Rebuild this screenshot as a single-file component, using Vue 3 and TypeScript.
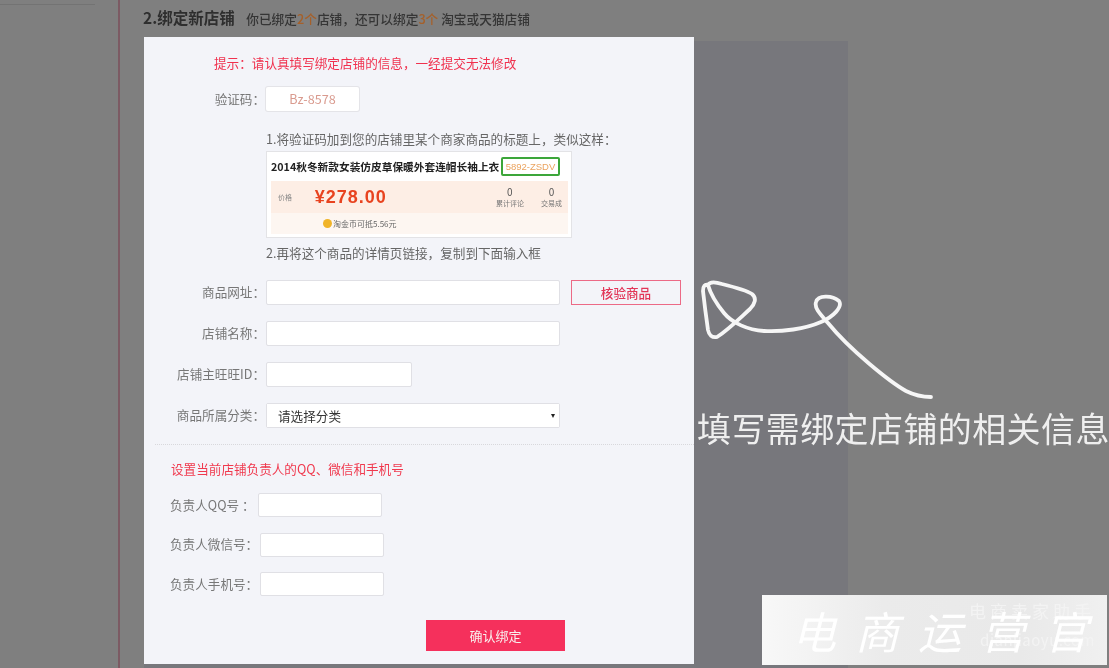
<script setup lang="ts">
import { ref } from 'vue'

const url = ref('')
const shopName = ref('')
const wangId = ref('')
const category = ref('')

interface Contact {
  label: string
  labelWidth: number
}

const contacts: Contact[] = [
  { label: '负责人QQ号 ：', labelWidth: 88 },
  { label: '负责人微信号：', labelWidth: 90 },
  { label: '负责人手机号：', labelWidth: 90 }
]
</script>

<template>
  <div class="page">
    <aside class="side"><div class="side-line"></div></aside>
    <main class="main">
      <h2 class="title">
        2.绑定新店铺
        <span class="sub">你已绑定<b>2个</b>店铺，还可以绑定<b>3个</b> 淘宝或天猫店铺</span>
      </h2>
      <div class="panel"></div>
    </main>

    <div class="modal">
      <p class="tip">提示：请认真填写绑定店铺的信息，一经提交无法修改</p>

      <div class="row code-row">
        <label class="label">验证码：</label>
        <div class="code">Bz-8578</div>
      </div>

      <div class="guide">
        <p class="hint">1.将验证码加到您的店铺里某个商家商品的标题上，类似这样：</p>
        <div class="sample">
          <div class="sample-title">
            <span class="sample-name">2014秋冬新款女装仿皮草保暖外套连帽长袖上衣</span>
            <span class="sample-code">5892-ZSDV</span>
          </div>
          <div class="sample-price">
            <span class="price-label">价格</span>
            <span class="price">¥278.00</span>
            <div class="stat"><i>0</i><small>累计评论</small></div>
            <div class="stat last"><i>0</i><small>交易成</small></div>
          </div>
          <div class="sample-coin"><span class="coin"></span>淘金币可抵5.56元</div>
        </div>
        <p class="hint second">2.再将这个商品的详情页链接，复制到下面输入框</p>
      </div>

      <div class="row field">
        <label class="label">商品网址：</label>
        <input v-model="url" class="input wide" />
        <button class="check" type="button">核验商品</button>
      </div>
      <div class="row field">
        <label class="label">店铺名称：</label>
        <input v-model="shopName" class="input wide" />
      </div>
      <div class="row field">
        <label class="label">店铺主旺旺ID：</label>
        <input v-model="wangId" class="input mid" />
      </div>
      <div class="row field">
        <label class="label">商品所属分类：</label>
        <div class="select wide">
          <select v-model="category">
            <option value="">请选择分类</option>
          </select>
        </div>
      </div>

      <div class="divider"></div>

      <div class="contacts">
        <p class="contact-tip">设置当前店铺负责人的QQ、微信和手机号</p>
        <div v-for="item in contacts" :key="item.label" class="row contact">
          <label class="contact-label" :style="{ width: item.labelWidth + 'px' }">{{ item.label }}</label>
          <input class="input small" />
        </div>
      </div>

      <button class="submit" type="button">确认绑定</button>
    </div>

    <div class="note">
      <svg class="scribble" width="240" height="130" viewBox="0 0 240 130" fill="none">
        <path
          d="M231 119 C222 119 214 117 206 113 C190 104 150 72 128 45 C120 36 114 30 116 24 C118 17 132 17 139 23 C143 29 133 39 121 44 C105 51 82 54 64 53 C48 52 32 45 24 35 C15 24 10 14 8 7 C10 3 16 4 22 6 C34 9 46 12 52 16 C57 20 55 26 50 31 C40 40 28 52 17 59 C12 60 9 57 8 52 C6 38 4 22 3 13 C3 8 5 6 8 7"
          stroke="#f6f6f6"
          stroke-width="3.8"
          stroke-linecap="round"
          stroke-linejoin="round"
        />
      </svg>
      <p class="note-text">填写需绑定店铺的相关信息</p>
    </div>

    <div class="mark">
      <span class="mark-top">电商卖家助手</span>
      <span class="mark-url">dianjiaoyu.com</span>
      <span class="mark-name">电商运营官</span>
    </div>
  </div>
</template>

<style scoped>
.page {
  position: relative;
  display: flex;
  width: 1109px;
  height: 668px;
  overflow: hidden;
  background: #7f7f7f;
  font-family: "Noto Sans CJK SC", "Liberation Sans", sans-serif;
  font-size: 12.6px;
  color: #666;
  filter: blur(0.4px);
}

.side {
  width: 118px;
  flex: none;
  padding-top: 4px;
}

.side-line {
  width: 95px;
  height: 1px;
  background: #737373;
}

.main {
  flex: 1;
  display: flex;
  flex-direction: column;
  border-left: 2px solid #7c5a63;
  padding-left: 24px;
}

.title {
  margin: 6px 0 0 -1px;
  height: 35px;
  line-height: 22px;
  font-size: 15.5px;
  font-weight: 700;
  color: #2e2e2e;
  white-space: nowrap;
}

.sub {
  margin-left: 8px;
  font-size: 12.7px;
  font-weight: 500;
  color: #353535;
}

.sub b {
  font-weight: 500;
  color: #a5602a;
}

.panel {
  flex: none;
  width: 704px;
  height: 627px;
  background: #77777c;
}

.modal {
  position: absolute;
  left: 144px;
  top: 37px;
  width: 550px;
  height: 627px;
  box-sizing: border-box;
  background: #f3f4f9;
  display: flex;
  flex-direction: column;
}

.tip {
  margin: 17px 0 0 70px;
  line-height: 17px;
  color: #f0314e;
}

.row {
  display: flex;
  align-items: center;
}

.label {
  width: 121px;
  flex: none;
  margin-right: 1px;
  padding-bottom: 2px;
  text-align: right;
  color: #777;
  white-space: nowrap;
}

.code-row {
  margin-top: 16px;
}

.code {
  width: 93px;
  height: 24px;
  line-height: 23px;
  text-align: center;
  background: #fff;
  border-radius: 2px;
  box-shadow: 0 0 0 1px #e4e4e8;
  color: #d99a8e;
}

.guide {
  margin: 19px 0 0 122px;
}

.hint {
  margin: 0;
  height: 17px;
  line-height: 17px;
  color: #666;
  white-space: nowrap;
}

.hint.second {
  margin-top: 6px;
}

.sample {
  width: 306px;
  height: 87px;
  margin-top: 4px;
  box-sizing: border-box;
  border: 1px solid #e3e3e6;
  background: #fff;
  padding: 5px 3px 0 4px;
}

.sample-title {
  display: flex;
  align-items: center;
  height: 19px;
}

.sample-name {
  width: 230px;
  flex: none;
  font-size: 10.7px;
  font-weight: 700;
  color: #222;
  white-space: nowrap;
}

.sample-code {
  width: 59px;
  height: 19px;
  box-sizing: border-box;
  border: 2px solid #3ca63a;
  border-radius: 2px;
  text-align: center;
  font-family: "Liberation Sans", sans-serif;
  font-size: 9.5px;
  line-height: 15px;
  color: #eba35e;
}

.sample-price {
  display: flex;
  align-items: center;
  height: 32px;
  margin-top: 5px;
  padding-left: 7px;
  background: #fdeee5;
}

.price-label {
  width: 38px;
  font-size: 7px;
  color: #888;
}

.price {
  width: 180px;
  font-family: "Liberation Sans", sans-serif;
  font-size: 18px;
  font-weight: 700;
  letter-spacing: 1px;
  color: #e8431f;
}

.stat {
  width: 44px;
  display: flex;
  flex-direction: column;
  align-items: center;
  color: #555;
}

.stat.last {
  width: 34px;
  margin-left: 4px;
}

.stat i {
  font-style: normal;
  font-size: 10px;
  line-height: 12px;
}

.stat small {
  font-size: 7px;
  line-height: 10px;
  color: #777;
  white-space: nowrap;
}

.sample-coin {
  display: flex;
  align-items: center;
  height: 21px;
  padding-left: 52px;
  background: #fdf6f1;
  font-size: 8px;
  color: #666;
}

.coin {
  width: 9px;
  height: 9px;
  margin-right: 1px;
  border-radius: 50%;
  background: #f0b429;
}

.field {
  height: 25px;
  margin-top: 16px;
}

.guide + .field {
  margin-top: 19px;
}

.input,
.select {
  position: relative;
  height: 25px;
  box-sizing: border-box;
  border: 1px solid #e0e0e5;
  border-radius: 2px;
  background: #fff;
  outline: none;
}

.wide {
  width: 294px;
}

.mid {
  width: 146px;
}

.small {
  width: 124px;
  height: 24px;
}

.select select {
  appearance: none;
  display: block;
  width: 100%;
  height: 23px;
  border: 0;
  background: #fff;
  padding: 0 3px 0 11px;
  font: inherit;
  color: #333;
  outline: none;
}

.select::after {
  content: "";
  position: absolute;
  right: 4px;
  top: 10px;
  border-left: 2.5px solid transparent;
  border-right: 2.5px solid transparent;
  border-top: 4px solid #222;
  pointer-events: none;
}

.check {
  width: 110px;
  height: 25px;
  margin-left: 11px;
  padding: 0 0 1px;
  border: 1.5px solid #ec6a86;
  background: #f3f4f9;
  font: inherit;
  font-weight: 500;
  color: #e23658;
}

.divider {
  height: 0;
  margin: 16px 0 0 11px;
  border-top: 1px dotted #d8d8dc;
}

.contacts {
  margin: 15px 0 0 26px;
}

.contact-tip {
  margin: 0 0 16px 1px;
  line-height: 17px;
  color: #f0394e;
}

.contact {
  height: 24px;
  margin-bottom: 15.5px;
}

.contact-label {
  flex: none;
  padding-bottom: 2px;
  white-space: nowrap;
  color: #777;
}

.submit {
  align-self: flex-start;
  width: 139px;
  height: 31px;
  margin: 8px 0 0 282px;
  border: 0;
  background: #f5305c;
  font: inherit;
  font-size: 13px;
  color: #f9f0ee;
}

.note {
  position: absolute;
  left: 697px;
  top: 278px;
  width: 412px;
}

.scribble {
  display: block;
  margin-left: 3px;
}

.note-text {
  margin: 0;
  line-height: 40px;
  font-size: 34px;
  letter-spacing: 0.4px;
  color: #efefef;
  white-space: nowrap;
}

.mark {
  position: absolute;
  left: 762px;
  top: 595px;
  width: 345px;
  height: 70px;
  overflow: hidden;
  background: linear-gradient(90deg, #f8f8f8, #ebebeb 35%, #e9e9e9 75%, #f0f0f0);
}

.mark-top {
  position: absolute;
  right: 12px;
  top: 3px;
  font-size: 17px;
  letter-spacing: 4px;
  color: #f3f3f3;
}

.mark-url {
  position: absolute;
  right: 12px;
  top: 34px;
  font-size: 15px;
  letter-spacing: 0.5px;
  color: #f3f3f3;
}

.mark-name {
  position: absolute;
  left: 30px;
  top: 4px;
  font-size: 44px;
  line-height: 62px;
  font-style: italic;
  letter-spacing: 19px;
  color: #fff;
  white-space: nowrap;
}
</style>
